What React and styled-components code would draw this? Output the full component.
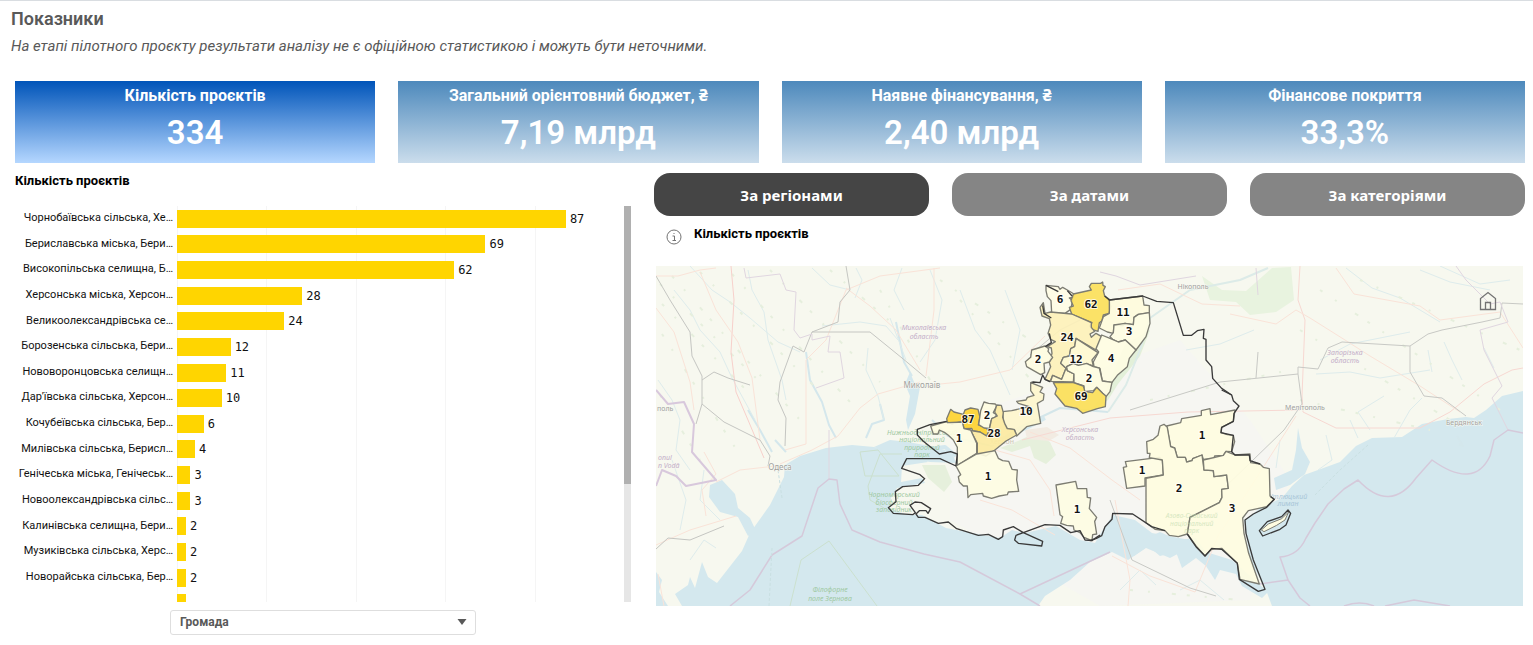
import React, { useState } from "react";
import styled, { createGlobalStyle } from "styled-components";

const GlobalStyle = createGlobalStyle`
  * {
    box-sizing: border-box;
  }

  body {
    margin: 0;
    background-color: white;
    color: #111;
    font-family: Roboto, "Noto Sans", sans-serif;
  }
`;

const StyledPage = styled.main`
  border-top: 1px solid #d9dde1;
  padding: 8px 8px 8px 15px;
`;

const StyledHeader = styled.header`
  margin-left: -4px;
  color: #595959;
`;

const StyledHeadline = styled.h1`
  margin: 0;
  font-size: 18px;
  line-height: 20px;
  font-weight: 600;
`;

const StyledNote = styled.p`
  margin: 7px 0 24px;
  font-size: 15px;
  line-height: 21px;
  font-style: italic;
`;

const StyledCards = styled.section`
  display: grid;
  grid-template-columns: repeat(4, 1fr);
  gap: 23px;
`;

const StyledCard = styled.button`
  height: 82px;
  padding: 5px 0 0;
  border: 0;
  display: flex;
  flex-direction: column;
  align-items: center;
  font-family: inherit;
  color: white;
  cursor: pointer;
  background: ${(props) =>
    props.$active
      ? "linear-gradient(#0054b9, #b5d7ff)"
      : "linear-gradient(#4d89bc, #cbddec)"};
`;

const StyledCardTitle = styled.span`
  font-size: 16px;
  line-height: 20px;
  font-weight: 700;
`;

const StyledCardValue = styled.span`
  margin-top: 7px;
  font-size: 33px;
  line-height: 40px;
  font-weight: 600;
`;

const StyledContent = styled.div`
  display: grid;
  grid-template-columns: 616fr 871fr;
  gap: 23px;
  margin-top: 10px;
`;

const StyledPanelTitle = styled.h2`
  margin: 0;
  font-size: 13px;
  line-height: 16px;
  font-weight: 700;
  color: black;
`;

const StyledChart = styled.div`
  display: flex;
  height: 396px;
  margin-top: 17px;
  overflow: hidden;
`;

const StyledLabels = styled.div`
  width: 162px;
  height: 410px;
  flex-shrink: 0;
  display: grid;
  grid-template-rows: repeat(16, 1fr);
  padding-right: 4px;
  text-align: right;
`;

const StyledLabel = styled.span`
  font-size: 11px;
  line-height: 23px;
  white-space: nowrap;
`;

const StyledPlot = styled.div`
  flex: 1;
  height: 410px;
  display: grid;
  grid-template-rows: repeat(16, 1fr);
  background: repeating-linear-gradient(
      to right,
      #f5f5f5 0 1px,
      transparent 1px 20%
    );
`;

const StyledBarRow = styled.div`
  display: flex;
  align-items: center;
`;

const StyledBar = styled.div`
  height: 18px;
  background-color: #ffd500;
`;

const StyledBarValue = styled.span`
  margin-left: 4px;
  font-family: "DejaVu Sans Mono", monospace;
  font-size: 12px;
  line-height: 18px;
`;

const StyledScrollbar = styled.div`
  width: 7px;
  background-color: #e6e6e6;
`;

const StyledThumb = styled.div`
  height: 278px;
  background-color: #b0b0b0;
`;

const StyledSelectBox = styled.label`
  position: relative;
  display: block;
  width: 306px;
  margin: 8px 0 0 155px;
`;

const StyledSelect = styled.select`
  appearance: none;
  width: 100%;
  height: 25px;
  padding: 0 9px 2px;
  border: 1px solid #dedede;
  border-radius: 3px;
  background-color: white;
  color: #595959;
  font-family: inherit;
  font-size: 12px;
  font-weight: 700;
`;

const StyledArrow = styled.svg`
  position: absolute;
  right: 9px;
  top: 8px;
  pointer-events: none;
`;

const StyledTabs = styled.nav`
  display: grid;
  grid-template-columns: repeat(3, 1fr);
  gap: 23px;
`;

const StyledTab = styled.button`
  height: 43px;
  border: 0;
  border-radius: 16px;
  background-color: ${(props) => (props.$active ? "#454545" : "#858585")};
  color: white;
  font-family: "Noto Sans", "Open Sans", sans-serif;
  font-size: 15px;
  font-weight: 700;
  cursor: pointer;
`;

const StyledMapHeader = styled.div`
  display: flex;
  gap: 12px;
  padding: 10px 0 0 12px;
  height: 50px;
`;

const StyledInfo = styled.button`
  width: 16px;
  height: 20px;
  padding: 2px 0 0;
  border: 0;
  background: none;

  svg {
    display: block;
  }
`;

const StyledMap = styled.div`
  position: relative;
  margin: 0 2px;
`;

const StyledMapDrawing = styled.svg`
  display: block;
  width: 100%;
  height: auto;
`;

const StyledHome = styled.button`
  position: absolute;
  top: 25px;
  right: 26px;
  width: 18px;
  height: 20px;
  padding: 0;
  border: 0;
  background: none;
  cursor: pointer;
`;

const cards = [
  { title: "Кількість проєктів", value: "334" },
  { title: "Загальний орієнтовний бюджет, ₴", value: "7,19 млрд" },
  { title: "Наявне фінансування, ₴", value: "2,40 млрд" },
  { title: "Фінансове покриття", value: "33,3%" },
];

const tabs = ["За регіонами", "За датами", "За категоріями"];

const communities = [
  { name: "Чорнобаївська сільська, Хе…", count: 87 },
  { name: "Бериславська міська, Бери…", count: 69 },
  { name: "Високопільська селищна, Б…", count: 62 },
  { name: "Херсонська міська, Херсон…", count: 28 },
  { name: "Великоолександрівська се…", count: 24 },
  { name: "Борозенська сільська, Бери…", count: 12 },
  { name: "Нововоронцовська селищн…", count: 11 },
  { name: "Дар'ївська сільська, Херсон…", count: 10 },
  { name: "Кочубеївська сільська, Бер…", count: 6 },
  { name: "Милівська сільська, Берисл…", count: 4 },
  { name: "Генічеська міська, Генічеськ…", count: 3 },
  { name: "Новоолександрівська сільс…", count: 3 },
  { name: "Калинівська селищна, Бери…", count: 2 },
  { name: "Музиківська сільська, Херс…", count: 2 },
  { name: "Новорайська сільська, Бер…", count: 2 },
  { name: "", count: 2 },
];

// every map tile is drawn at three times its size on the map
const tile = (x, y) => `translate(${x} ${y}) scale(0.33333)`;

const north = [
  ["#fefce4", "M108 46L145 50 150 58 158 52 172 60 192 72 190 82 178 84 188 92 182 118 165 130 125 128 123 92 112 80 108 62Z"],
  ["#fbdf58", "M190 72L244 60 238 50 244 40 272 40 278 36 279 46 286 50 280 62 284 78 298 88 302 110 297 130 280 135 276 152 268 158 264 184 246 178 240 168 246 158 228 150 185 132 178 112 190 108 183 92Z"],
  ["#fefbdc", "M298 90L398 78 402 105 418 107 418 128 385 133 372 142 370 164 345 160 338 167 312 165 310 190 292 186 268 174 280 140 298 130Z"],
  ["#fefde2", "M418 128L420 160 408 200 378 240 346 210 325 216 308 208 300 200 310 188 312 165 345 160 370 164 372 142 385 133Z"],
  ["#fdf1b8", "M100 98L90 112 96 138 118 146 122 165 114 190 122 208 136 215 112 230 124 234 126 250 118 278 122 290 105 328 120 335 128 316 155 328 168 295 152 280 160 262 178 258 182 236 194 230 198 205 258 240 275 200 258 190 244 202 240 192 254 184 244 172 244 158 185 132 122 126 105 130Z"],
  ["#fefde2", "M275 195L300 205 325 216 346 210 378 240 358 265 352 290 322 316 306 337 277 333 270 295 252 290 250 276 266 246 258 236Z"],
  ["#fef8d0", "M198 205L264 248 246 270 250 288 230 282 205 286 190 280 170 290 172 302 192 312 190 336 122 334 128 316 155 328 168 295 152 280 160 262 178 258 182 236 194 230Z"],
  ["#fefde0", "M170 290L190 280 205 286 230 280 250 290 268 294 277 333 306 337 300 365 288 380 260 352 250 362 222 365 222 348 192 338 192 312 172 302Z"],
  ["#fcdf54", "M130 338L190 338 220 348 225 365 248 368 260 352 278 370 288 378 286 410 262 416 218 430 200 415 165 408 135 372 140 356Z"],
  ["#fefce0", "M65 240L105 228 116 236 114 244 128 262 118 276 102 280 104 308 92 314 50 290 46 275 62 262Z"],
];

const west = [
  ["#fef6cc", "M452 8L488 22 480 36 492 42 490 60 472 70 482 130 440 140 410 168 404 150 380 145 370 125 368 95 395 92 448 80 415 70 410 64 438 60 442 52 462 46 452 32Z"],
  ["#fdd22c", "M212 88L222 96 250 103 255 90 272 84 294 88 300 112 295 135 318 144 330 156 320 168 300 156 278 152 275 145 252 146 247 124 215 132 202 126 200 116Z"],
  ["#fefce0", "M312 66L326 70 346 72 350 78 340 98 350 104 345 112 335 116 328 145 312 144 296 134 302 92Z"],
  ["#fdea9e", "M350 75L364 76 370 98 368 112 374 130 382 146 402 148 410 165 378 183 342 212 318 228 292 220 292 190 272 152 300 156 320 168 328 148 335 116 352 108 344 96Z"],
  ["#fefce0", "M152 138L200 125 202 128 247 126 252 146 272 150 290 190 290 220 232 256 232 202 220 180 205 166 195 158 178 150 174 162 160 162Z"],
  ["#fefde2", "M228 258L290 222 345 212 355 235 368 242 386 244 396 268 412 270 410 300 416 334 385 336 382 344 358 348 335 355 310 348 308 340 272 344 264 353 262 318 250 318 238 306 235 290 242 284Z"],
  ["#fefde2", "M528 315L587 304 592 326 620 326 622 352 632 354 628 386 650 412 644 424 650 462 638 464 636 482 612 472 600 458 582 450 580 438 560 436 542 430 548 410 540 404Z"],
];

const east = [
  ["#fffde0", "M230 108L272 98 275 86 334 76 334 62 360 56 362 74 435 60 430 94 395 112 393 128 412 134 430 136 434 155 425 185 408 184 400 196 374 198 372 206 340 208 336 195 308 206 306 212 290 216 286 202 262 202 254 174 242 170Z"],
  ["#fffde2", "M100 232L110 230 106 215 208 202 217 210 220 255 165 264 165 288 110 295Z"],
  ["#fffddf", "M210 108L222 103 232 112 242 170 254 174 262 202 286 202 290 216 306 212 308 206 336 195 342 240 370 242 372 260 410 255 415 295 395 298 396 322 388 338 300 382 292 432 265 440 238 436 225 422 195 418 168 398 168 265 220 255 217 210 178 203 180 190 172 190 170 155 190 148 204 136Z"],
  ["#fffde0", "M340 210L400 196 408 184 435 195 480 192 482 218 510 222 520 232 538 236 540 318 552 328 530 350 475 362 458 384 462 430 476 490 508 582 450 568 442 520 395 475 365 478 345 498 318 468 292 432 300 382 388 338 396 322 395 298 415 295 410 255 372 260 370 242 342 240Z"],
];

const northBorder =
  "M108 46L145 65M172 62L186 78M284 78L298 90 398 78 440 94 490 98 520 196 545 196 562 182 582 178 580 205 588 208 588 270 605 290 608 325 635 355 665 375M98 106L102 130 124 144M118 190L124 218 106 230M120 335L105 328 98 315 90 338 70 336 62 338";

const westBorder =
  "M228 256L232 222 212 215 178 222 130 184 112 165 112 148 150 134 200 124M228 258L180 236 80 236 65 265 120 284 134 296 115 316 68 320 46 335 48 365 25 383 40 400 98 404 106 398 90 376 105 366 124 368 152 386 144 400 138 392 118 392 108 402 115 412 135 412 175 430 205 426 230 446 295 466 325 463 355 478 368 470 370 450 400 440 430 458 408 466 404 480 415 490 485 498 488 484 430 458 495 434 540 436 572 458 600 452 615 480 635 482 660 465";

const eastBorder =
  "M395 0L425 15 430 32 447 48 432 70 430 94 395 112 393 128 430 136 425 185 435 195 478 195 480 212 510 222M0 452L18 446 35 437 45 410 66 388 68 370 128 372 185 410 225 422M292 432L318 470 345 498 365 475 395 478 442 520 448 568 505 604 525 598 490 510 468 430 465 390 490 372 530 352 553 328 542 320M508 422L532 395 575 380 594 360 602 370 588 405 570 418 518 438Z";

const mapCounts = [
  [1060, 303, 6],
  [1091, 308, 62],
  [1123, 316, 11],
  [1129, 335, 3],
  [1067, 341, 24],
  [1111, 362, 4],
  [1076, 363, 12],
  [1038, 363, 2],
  [1089, 382, 2],
  [1081, 400, 69],
  [1026, 415, 10],
  [968, 423, 87],
  [987, 419, 2],
  [994, 437, 28],
  [959, 442, 1],
  [988, 480, 1],
  [1077, 513, 1],
  [1202, 439, 1],
  [1142, 474, 1],
  [1179, 492, 2],
  [1232, 512, 3],
];

function Regions({ items }) {
  return items.map(([color, d]) => (
    <path
      key={d}
      d={d}
      fill={color}
      fillOpacity="0.9"
      stroke="#7c7c72"
      strokeWidth="4"
      strokeLinejoin="round"
    />
  ));
}

function Border({ d }) {
  return (
    <path
      d={d}
      fill="none"
      stroke="#3a3a3a"
      strokeWidth="4"
      strokeLinejoin="round"
    />
  );
}

function BaseMap() {
  return (
    <g fill="none" strokeLinejoin="round">
      <rect x="656" y="266" width="867" height="340" fill="#f7f8ef" />
      <path
        d="M950 420L1040 390 1180 340 1250 420 1290 480 1250 600 1100 606 950 520Z"
        fill="#f6f6f2"
      />

      {/* woods */}
      <path
        d="M1202 276L1222 290 1246 291 1272 268 1291 267 1294 300 1276 312 1250 315 1236 302 1210 300Z"
        fill="#e8f3df"
      />
      <path
        d="M1125 345L1150 330 1140 356 1118 384 1108 400 1090 412 1105 392Z"
        fill="#e3f0d9"
      />
      <path
        d="M1000 448L1018 441 1035 433 1050 442 1056 455 1046 464 1034 458 1030 446 1012 452Z"
        fill="#e6f0dc"
      />
      <path
        d="M922 465L945 465 952 482 944 492 928 478Z"
        fill="#e6f0dc"
      />
      <path d="M1025 430l22-3 12 8-10 6-22-2z" fill="#f2ebe2" />

      {/* seas and estuaries */}
      <g fill="#d4e8ee">
        <path d="M682 606L675 594 688 585 690 577 695 588 702 562 708 577 717 583 742 551 750 533 770 505 784 477 785 465 800 456 826 448 852 445 874 447 894 452 912 450 928 462 902 466 901 482 922 478 925 483 897 488 891 498 889 508 905 514 922 515 946 528 978 534 1000 538 1012 530 1025 533 1056 526 1080 540 1095 543 1104 528 1113 515 1135 520 1152 533 1190 540 1205 556 1185 550 1170 558 1146 548 1128 560 1112 552 1090 562 1070 580 1045 596 1038 606Z" />
        <path d="M874 447L890 440 908 442 930 446 952 452 956 463 930 462 898 456Z" />
        <path d="M656 572L662 580 659 592 668 606H656Z" />
        <path d="M710 485L722 480 735 494 738 508 750 518 756 531 748 536 738 517 720 512 709 497Z" />
        <path d="M1272 606L1266 590 1250 560 1244 520 1262 507 1282 498 1292 486 1304 475 1318 470 1340 462 1356 446 1372 438 1402 437 1422 424 1448 419 1466 417 1474 418 1486 410 1502 396 1523 391V606Z" />
        <path d="M1298 428L1302 448 1310 462 1305 474 1290 485 1276 490 1274 478 1292 470 1296 450Z" />
        <path d="M1110 528L1132 530 1128 536 1142 540 1160 532 1178 540 1196 538 1206 552 1232 560 1248 574 1268 592 1262 598 1242 586 1236 574 1220 570 1215 580 1206 566 1196 558 1182 568 1176 552 1160 556 1148 546 1134 556 1120 548Z" />
        <path d="M910 372l4 10 6 5-5 27-7 16-2-10 4-24-5-12z" />
      </g>
      <path
        d="M932 420L948 436 992 446 1018 428 1060 408 1108 412"
        stroke="#d4e6ea"
        strokeWidth="2"
      />
      <path
        d="M1108 412L1126 385 1140 350 1150 318 1190 290 1240 280 1268 268"
        stroke="#dcebe8"
        strokeWidth="2"
      />
      <path
        d="M920 450L945 447 956 456M1000 440L1030 426 1045 418"
        stroke="#d4e8ee"
        strokeWidth="4"
      />
      <path
        d="M806 352L810 380 822 402 829 425 836 438M748 410L760 430 772 452M866 438L872 424 884 420 880 404M775 440L786 452M1457 436L1463 446 1459 444M896 322L904 362 912 376"
        stroke="#d4e7ec"
        strokeWidth="2"
      />

      {/* small rivers */}
      <g stroke="#deecec" strokeWidth="1">
        <path d="M690 266L712 290 730 302 750 318 778 342 800 352M748 270L752 290 764 312 768 340 782 380 786 400M674 290L690 310 700 330 720 352 732 378 755 420" />
        <path d="M812 268L830 285 850 290M856 268L862 280 855 298M890 318L900 344 906 360M868 348L866 370 878 396 884 420M822 326L860 322 886 326 898 340" />
        <path d="M930 270L942 300 935 340 920 362M902 268L894 290 904 310M960 290L975 330 990 350 1010 395M1005 290L1020 330 1012 370" />
        <path d="M1346 268L1372 288 1400 298 1420 310 1440 322M1320 360L1350 344 1380 338 1410 332M1316 374L1350 372 1380 378 1430 370M1428 350L1432 372M1444 342L1452 360 1462 380M1484 348L1494 368M1370 430L1358 412 1384 396M1394 438L1410 410 1422 398" />
        <path d="M1420 270L1450 282 1490 290M1440 266L1480 284 1510 280M1186 350L1220 344 1254 330M658 380L672 400 680 420 676 450 690 470M672 460L686 500 680 530M704 470L700 500 720 520M690 560L704 540 716 548" />
        <path d="M1326 435L1332 460 1318 470M1350 420L1358 438M1280 440L1276 468M1120 590L1140 570 1156 585M1180 590L1200 580 1224 600" />
      </g>

      {/* woodland flecks */}
      <g stroke="#e6efdd" strokeWidth="2" strokeDasharray="3 15 2 22 4 11">
        <path d="M660 284L760 382M662 304L750 394M672 276L800 420M662 334L738 452M700 272L820 392M732 274L850 402M770 270L880 382M660 395L700 460" />
        <path d="M830 270L900 330M880 290L930 380M940 280L1030 340M1320 290L1500 410M1300 330L1450 420M1360 280L1520 350M1300 400L1430 430M1150 400L1290 370M1130 590L1240 600M960 300L1040 390" />
      </g>

      {/* main roads */}
      <g stroke="#fae3d8" strokeWidth="1">
        <path d="M731 266L734 300 731 352 736 392 748 420 764 458" stroke="#f7d0cb" />
        <path d="M656 276L678 276 700 270 716 268M700 272L716 310 738 342 752 378 760 440M656 308L674 332 690 382 694 410M656 545L690 530 736 516M704 452L716 474 702 490 706 516M664 606L658 574" />
        <path d="M776 466L740 470 716 482M780 464L812 450 838 436 860 408 878 394 920 382M846 288L870 306 896 330 920 370M846 290L880 276 940 268M934 268L934 310 926 376M785 450L806 444 806 360 826 340 846 290" />
        <path d="M1030 432L1070 448 1112 480 1140 500M930 385L960 382 1010 370 1045 336M980 500L1012 510 1055 535M995 450L1030 460 1050 490 1054 516M1118 290L1160 284 1202 304 1240 306" />
        <path d="M1022 440L1110 418 1188 412 1300 410M1300 266L1298 300 1305 320 1302 396 1303 412 1336 428 1420 428 1450 412 1484 384 1512 370 1523 368" stroke="#f7d8d2" />
        <path d="M1230 314L1276 324 1296 310 1310 318 1345 340 1370 356 1420 386 1460 412M1336 268L1354 294 1420 306 1440 320 1500 312 1523 348M1112 556L1150 576 1195 592 1218 536 1250 488 1296 416M1115 500L1130 580 1128 606" />
      </g>
      <path
        d="M656 276L670 300 690 332 692 356 702 376 702 404 696 424M702 380L714 372 728 378 750 385M846 266L850 290 840 302 838 322 812 332 804 352 793 346 780 382 778 400 786 418 785 446M812 332L870 332 902 358 926 378M702 404L724 422 760 440 770 456 768 466M656 549L668 538 690 540 724 526"
        stroke="#c5c6c2"
        strokeWidth="1"
      />
      <path
        d="M1130 410L1220 382 1298 374 1298 367 1318 369 1328 348 1342 342 1410 346 1428 334 1442 330 1482 322 1500 318 1502 303 1523 304M1410 346L1410 372 1424 396 1442 398 1466 416M1298 374L1302 404 1284 430 1220 492M1256 378L1258 352M1030 355L1060 330 1080 320M1110 500L1132 560 1190 588 1216 596"
        stroke="#c8c9c5"
        strokeWidth="1"
      />

      {/* administrative borders */}
      <g stroke="#e0d6e0" strokeWidth="1">
        <path d="M744 268L746 278 780 274 786 290 796 292 794 330 800 338 812 334 812 340 830 336 828 352 840 352 844 378 816 388" />
        <path d="M1456 266L1466 280 1490 304 1500 302 1508 322 1480 330 1484 350 1494 370 1502 386 1492 398 1508 430M1100 272L1116 276 1140 285 1196 276M829 430L829 480M1256 268L1258 295" />
        <path d="M656 390L668 404 684 402 694 424 692 452 716 480 686 486 676 476 662 470 656 486" stroke="#d8c8dc" strokeWidth="2" />
        <path d="M730 606L750 590 772 555 802 536 808 518 818 488 829 479 837 480 840 504 852 530 880 542 924 554 960 562 1020 594 1040 606M1020 594L1110 552M1260 584L1288 580 1280 557Q1298 556 1306 538L1315 523 1328 504 1344 489 1358 480Q1390 514 1416 478L1432 460Q1474 490 1490 456L1494 440 1508 430 1523 433M1288 580L1300 598 1310 606M1344 606Q1360 600 1374 606M1385 606L1414 600 1450 606" stroke="#d5c9da" strokeWidth="1.5" />
      </g>
      <path
        d="M829 541L801 560 790 606M829 541L877 606M860 452L865 476 899 476 878 450ZM902 454L880 454 868 486 870 500 884 508"
        stroke="#cbe0ce"
        strokeWidth="1"
      />
      <path
        d="M1315 495L1340 470 1368 445M782 498L778 470M772 548L769 606"
        stroke="#c9e0e2"
        strokeDasharray="3 2"
      />
    </g>
  );
}

function PlaceNames() {
  return (
    <g
      fontFamily="Noto Sans, sans-serif"
      textAnchor="middle"
      fontSize="7"
      fill="#a1a19e"
      stroke="#f8f9f2"
      strokeWidth="1"
      paintOrder="stroke"
    >
      <g fontSize="8">
        <text x="922" y="388">Миколаїв</text>
        <text x="780" y="470">Одеса</text>
      </g>
      <text x="1193" y="289">Нікополь</text>
      <text x="1305" y="410">Мелітополь</text>
      <text x="1464" y="425">Бердянськ</text>
      <text x="1002" y="444" fill="#ccc6b4">Херсон</text>
      <text x="657" y="411" textAnchor="start">поль</text>
      <g fill="#c3adc6" fontStyle="italic">
        <text x="924" y="330">Миколаївська</text>
        <text x="924" y="339">область</text>
        <text x="1345" y="355">Запорізька</text>
        <text x="1345" y="363">область</text>
        <text x="1080" y="432">Херсонська</text>
        <text x="1080" y="440">область</text>
        <text x="658" y="460" textAnchor="start">onul</text>
        <text x="658" y="468" textAnchor="start">n Vodă</text>
      </g>
      <g fill="#9fc9a3" stroke="none" fontStyle="italic">
        <text x="922" y="435">Нижньодніпровський</text>
        <text x="922" y="442">національний</text>
        <text x="922" y="450">природний</text>
        <text x="922" y="457">парк</text>
        <text x="894" y="497">Чорноморський</text>
        <text x="894" y="505">біосферний</text>
        <text x="894" y="512">заповідник</text>
        <text x="830" y="592">Філофорне</text>
        <text x="830" y="601">поле Зернова</text>
      </g>
      <g fill="#a9c6d8" fontStyle="italic" stroke="none">
        <text x="1288" y="499">Утлюцький</text>
        <text x="1288" y="506">лиман</text>
      </g>
    </g>
  );
}

function RegionMap() {
  return (
    <StyledMap>
      <StyledMapDrawing
        viewBox="656 266 867 340"
        role="img"
        aria-label="Кількість проєктів"
      >
        <BaseMap />
        <PlaceNames />
        <g transform={tile(1010, 270)}>
          <Regions items={north} />
          <Border d={northBorder} />
        </g>
        <g transform={tile(880, 380)}>
          <Regions items={west} />
          <Border d={westBorder} />
        </g>
        <g transform={tile(1090, 390)}>
          <Regions items={east} />
          <path
            d="M514 420L535 402 575 386 596 366 585 390 560 406 522 425Z"
            fill="#fffde2"
            stroke="#7c7c72"
            strokeWidth="3"
          />
          <Border d={eastBorder} />
          <g fill="#bcd9ac" fontFamily="Noto Sans, sans-serif" fontSize="20" fontStyle="italic" textAnchor="middle" opacity="0.6">
            <text x="305" y="384">Азово-Сиваський</text>
            <text x="305" y="407">національний</text>
            <text x="305" y="430">парк</text>
          </g>
        </g>
        <g
          fontFamily="DejaVu Sans Mono, monospace"
          fontSize="11"
          fontWeight="700"
          textAnchor="middle"
          fill="#111"
          stroke="white"
          strokeWidth="2"
          strokeOpacity="0.8"
          paintOrder="stroke"
        >
          {mapCounts.map(([x, y, count]) => (
            <text key={`${x}-${y}`} x={x} y={y}>
              {count}
            </text>
          ))}
        </g>
      </StyledMapDrawing>
      <StyledHome type="button" aria-label="home">
        <svg width="18" height="20" fill="none" stroke="#737373" strokeWidth="1.3">
          <path d="M1.5 18.5V7.5L9 1.5 16.5 7.5V18.5ZM6.5 18.5V11.5H11.5V18.5" />
        </svg>
      </StyledHome>
    </StyledMap>
  );
}

function App() {
  const [activeCard, setActiveCard] = useState(0);
  const [activeTab, setActiveTab] = useState(0);

  return (
    <StyledPage>
      <GlobalStyle />
      <StyledHeader>
        <StyledHeadline>Показники</StyledHeadline>
        <StyledNote>
          На етапі пілотного проєкту результати аналізу не є офіційною
          статистикою і можуть бути неточними.
        </StyledNote>
      </StyledHeader>
      <StyledCards>
        {cards.map((card, index) => (
          <StyledCard
            key={card.title}
            type="button"
            $active={index === activeCard}
            onClick={() => setActiveCard(index)}
          >
            <StyledCardTitle>{card.title}</StyledCardTitle>
            <StyledCardValue>{card.value}</StyledCardValue>
          </StyledCard>
        ))}
      </StyledCards>
      <StyledContent>
        <section>
          <StyledPanelTitle>Кількість проєктів</StyledPanelTitle>
          <StyledChart>
            <StyledLabels>
              {communities.map((item, index) => (
                <StyledLabel key={index}>{item.name}</StyledLabel>
              ))}
            </StyledLabels>
            <StyledPlot>
              {communities.map((item, index) => (
                <StyledBarRow key={index}>
                  <StyledBar style={{ width: `${item.count}%` }} />
                  {item.name && <StyledBarValue>{item.count}</StyledBarValue>}
                </StyledBarRow>
              ))}
            </StyledPlot>
            <StyledScrollbar>
              <StyledThumb />
            </StyledScrollbar>
          </StyledChart>
          <StyledSelectBox>
            <StyledSelect aria-label="Громада" defaultValue="community">
              <option value="community">Громада</option>
            </StyledSelect>
            <StyledArrow width="10" height="8">
              <path d="M0.5 1H9.5L5 7Z" fill="#595959" />
            </StyledArrow>
          </StyledSelectBox>
        </section>
        <section>
          <StyledTabs>
            {tabs.map((tab, index) => (
              <StyledTab
                key={tab}
                type="button"
                $active={index === activeTab}
                onClick={() => setActiveTab(index)}
              >
                {tab}
              </StyledTab>
            ))}
          </StyledTabs>
          <StyledMapHeader>
            <StyledInfo type="button" aria-label="info">
              <svg width="16" height="16" fill="none" stroke="#737373">
                <circle cx="8" cy="8" r="7" />
                <path d="M6.5 7H8.5V11.5M6.5 11.5H10M7.5 4.5H8.5" />
              </svg>
            </StyledInfo>
            <StyledPanelTitle>Кількість проєктів</StyledPanelTitle>
          </StyledMapHeader>
          <RegionMap />
        </section>
      </StyledContent>
    </StyledPage>
  );
}

export default App;
